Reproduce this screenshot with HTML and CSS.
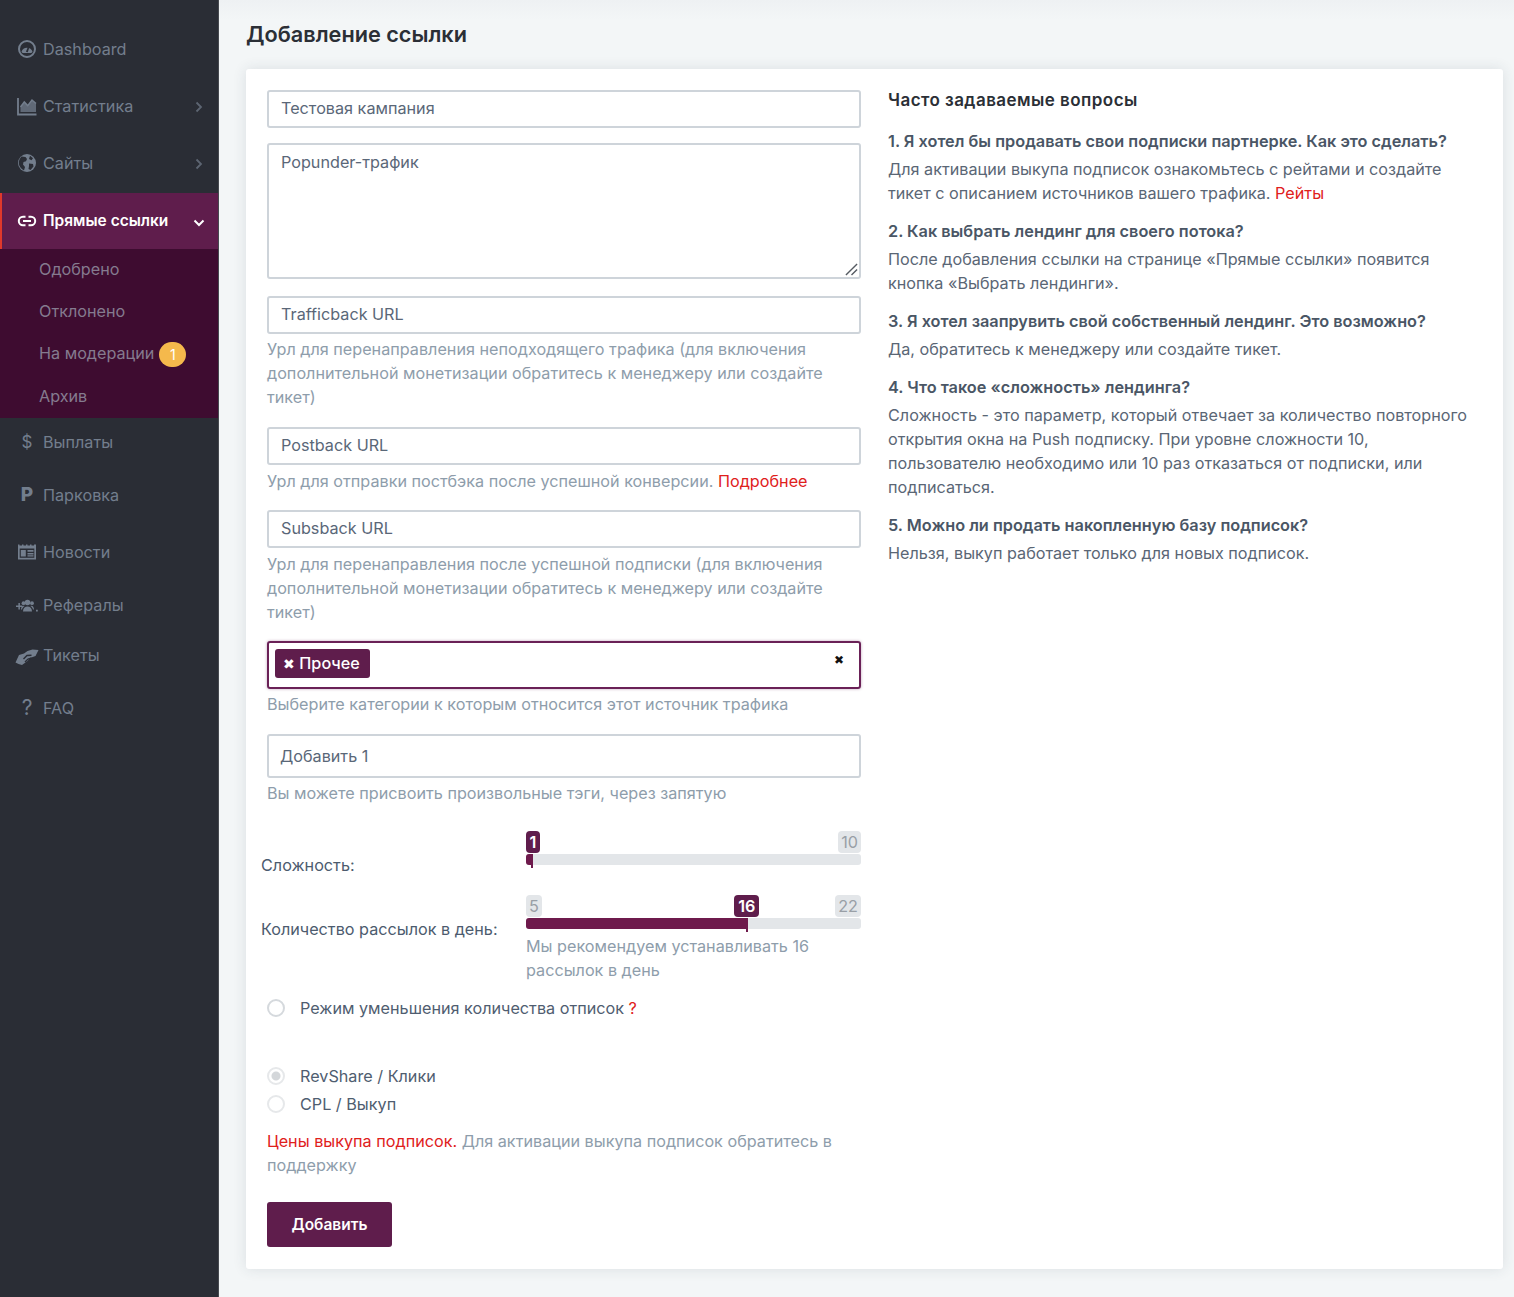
FILE: index.html
```html
<!DOCTYPE html>
<html lang="en">
<head>
    <meta charset="UTF-8">
    <title>Добавление ссылки</title>
    <link rel="stylesheet" href="styles.css">
</head>
<body>
    <div class="layout">
        <nav class="sidebar">
            <a class="navItem">
                <svg class="navIcon" viewBox="0 0 20 20"><circle cx="10" cy="10" r="8" fill="none" stroke="currentColor" stroke-width="2"/><path d="M4.500 12.800a5.800 5.800 0 0 1 11 0c-.4.900-1.200 1.200-2 1.200h-7c-.8 0-1.600-.3-2-1.200z" fill="currentColor"/><path d="M8.900 12.800l3-7.300 1.200.5-2.300 7.300z" fill="#2a2d35"/></svg>
                <span>Dashboard</span>
            </a>
            <a class="navItem">
                <svg class="navIcon" viewBox="0 0 20 20"><path d="M1 2v16.500h18.500" fill="none" stroke="currentColor" stroke-width="1.800"/><path d="M3.500 16V11l3.800-5 3.400 3.600L15 4l4 3.500V16z" fill="currentColor" opacity="0.75"/><path d="M3.500 11l3.800-5 3.400 3.600L15 4l4 3.500" fill="none" stroke="currentColor" stroke-width="1.500"/></svg>
                <span>Статистика</span>
                <svg class="navArrow" viewBox="0 0 10 12"><path d="M2.500 1.500L7 6l-4.500 4.500" fill="none" stroke="currentColor" stroke-width="1.800"/></svg>
            </a>
            <a class="navItem">
                <svg class="navIcon" viewBox="0 0 20 20"><circle cx="10" cy="10" r="9" fill="currentColor"/><path d="M4.500 3.500L8.500 4l1.500 2-1 2.200-2.500.8-.5 2.500 2 2.500-1 3.500C4 15.500 1.800 13 1.800 10c0-2.500 1-4.800 2.700-6.500zM12 10.500l4 .5.500 2.500-3 3.500-2-1 .5-3zM13 2.800l3 2.500-1.500 2-2.500-1.300z" fill="#2a2d35"/></svg>
                <span>Сайты</span>
                <svg class="navArrow" viewBox="0 0 10 12"><path d="M2.500 1.500L7 6l-4.500 4.500" fill="none" stroke="currentColor" stroke-width="1.800"/></svg>
            </a>
            <a class="navItem navActive">
                <svg class="navIcon" viewBox="0 0 20 20"><path d="M8.500 5.800H6a4.200 4.200 0 0 0 0 8.400h2.500M11.500 5.800H14a4.200 4.200 0 0 1 0 8.400h-2.500M6 10h8" fill="none" stroke="currentColor" stroke-width="2"/></svg>
                <span>Прямые ссылки</span>
                <svg class="navArrow navArrowDown" viewBox="0 0 12 10"><path d="M1.500 2.500L6 7l4.500-4.500" fill="none" stroke="currentColor" stroke-width="2"/></svg>
            </a>
            <div class="subMenu">
                <a class="subItem">Одобрено</a>
                <a class="subItem">Отклонено</a>
                <a class="subItem">На модерации <span class="badge">1</span></a>
                <a class="subItem">Архив</a>
            </div>
            <a class="navItem h50">
                <span class="navGlyph">$</span>
                <span>Выплаты</span>
            </a>
            <a class="navItem h56">
                <span class="navGlyph navGlyphBold">P</span>
                <span>Парковка</span>
            </a>
            <a class="navItem h58">
                <svg class="navIcon" viewBox="0 0 20 20"><path d="M1 2.500h1.500v1H5v-1h1.500v1H9v-1h1.500v1H13v-1h1.500v1H17v-1h2v15H1z" fill="currentColor"/><path d="M2.700 6.500h14.600v9.300H2.700z" fill="#2a2d35"/><path d="M3.800 8h5v6.500h-5zM10.500 8h6v1.700h-6zM10.500 11h6v1.400h-6zM10.500 13.300h6v1.200h-6z" fill="currentColor"/></svg>
                <span>Новости</span>
            </a>
            <a class="navItem h48">
                <svg class="navIcon navIconUsers" viewBox="0 0 22 20"><path d="M0 9.500h2.400V7.100h1.500v2.400h2.400V11H3.900v2.400H2.400V11H0z" fill="currentColor"/><circle cx="11.500" cy="6.500" r="2.800" fill="currentColor"/><circle cx="7.500" cy="7.200" r="1.900" fill="currentColor"/><circle cx="16" cy="7.200" r="1.900" fill="currentColor"/><path d="M7 15.500c0-3.300 2-5 4.500-5s4.500 1.700 4.500 5zM5 13.500c.1-2.300 1-3.700 2.600-3.700.4 0 .8.100 1 .2C7.200 11 6.300 12.200 6 13.500zM17 13.500c-.3-1.300-1.200-2.500-2.600-3.500.2-.1.600-.2 1-.2 1.600 0 2.500 1.400 2.600 3.700zM20 13.700h1.800v1.800H20z" fill="currentColor"/></svg>
                <span>Рефералы</span>
            </a>
            <a class="navItem h52">
                <svg class="navIcon navIconWide" viewBox="0 0 24 20"><path d="M.5 15.500l3.500-7.500 5-1.500L12.500 4l5-1.500 6 .5-3 6-5.500 2-2.500 3-5.500 4-3.500-1z" fill="currentColor"/><path d="M8.500 12l3.500-3.500 4.500-.3M10 15l3-3 3.500-1" fill="none" stroke="#2a2d35" stroke-width="1.400"/></svg>
                <span>Тикеты</span>
            </a>
            <a class="navItem h54">
                <span class="navGlyph navGlyphBig">?</span>
                <span>FAQ</span>
            </a>
        </nav>

        <main class="content">
            <h1 class="pageTitle">Добавление ссылки</h1>
            <div class="card">
                <form class="formCol">
                    <input class="field" type="text" value="Тестовая кампания">
                    <div class="areaWrap">
                        <textarea class="field fieldArea">Popunder-трафик</textarea>
                        <svg class="areaGrip" viewBox="0 0 14 14"><path d="M1 13L13 1M7 13l6-6" fill="none" stroke="#555b62" stroke-width="1.500"/></svg>
                    </div>

                    <input class="field gapTop" type="text" value="Trafficback URL">
                    <p class="help helpRaised">Урл для перенаправления неподходящего трафика (для включения дополнительной монетизации обратитесь к менеджеру или создайте тикет)</p>

                    <input class="field gapTop" type="text" value="Postback URL">
                    <p class="help"><span>Урл для отправки постбэка после успешной конверсии.</span> <a class="redLink">Подробнее</a></p>

                    <input class="field gapTop" type="text" value="Subsback URL">
                    <p class="help">Урл для перенаправления после успешной подписки (для включения дополнительной монетизации обратитесь к менеджеру или создайте тикет)</p>

                    <div class="tagSelect">
                        <span class="tag"><span class="tagClose">✖</span> Прочее</span>
                        <span class="selectClear">✖</span>
                    </div>
                    <p class="help helpTight">Выберите категории к которым относится этот источник трафика</p>

                    <input class="field fieldTall" type="text" value="Добавить 1">
                    <p class="help helpTight">Вы можете присвоить произвольные тэги, через запятую</p>

                    <div class="sliderRow firstSlider">
                        <label class="sliderLabel">Сложность:</label>
                        <div class="slider">
                            <div class="sliderEnds">
                                <span class="bubble bubbleHidden">1</span>
                                <span class="bubble">10</span>
                            </div>
                            <div class="track">
                                <div class="fill" style="width: 2%"></div>
                                <span class="bubble bubbleValue bubbleNarrow" style="left: 0">1</span>
                            </div>
                        </div>
                    </div>

                    <div class="sliderRow secondSlider">
                        <label class="sliderLabel">Количество рассылок в день:</label>
                        <div class="slider">
                            <div class="sliderEnds">
                                <span class="bubble">5</span>
                                <span class="bubble">22</span>
                            </div>
                            <div class="track">
                                <div class="fill" style="width: 66.3%"></div>
                                <span class="bubble bubbleValue" style="left: 62.2%">16</span>
                            </div>
                            <p class="help sliderHelp">Мы рекомендуем устанавливать 16 рассылок в день</p>
                        </div>
                    </div>

                    <label class="radioRow radioFirst">
                        <input class="radio" type="radio">
                        <span>Режим уменьшения количества отписок <a class="redLink">?</a></span>
                    </label>

                    <label class="radioRow radioSecond">
                        <input class="radio" type="radio" checked disabled>
                        <span>RevShare / Клики</span>
                    </label>
                    <label class="radioRow radioThird">
                        <input class="radio" type="radio" disabled>
                        <span>CPL / Выкуп</span>
                    </label>
                    <p class="help priceHelp"><a class="redLink">Цены выкупа подписок.</a> <span>Для активации выкупа подписок обратитесь в поддержку</span></p>

                    <button class="submitButton" type="button">Добавить</button>
                </form>

                <aside class="faq">
                    <h2 class="faqTitle">Часто задаваемые вопросы</h2>
                    <h3 class="faqQuestion">1. Я хотел бы продавать свои подписки партнерке. Как это сделать?</h3>
                    <p class="faqAnswer"><span>Для активации выкупа подписок ознакомьтесь с рейтами и создайте тикет с описанием источников вашего трафика.</span> <a class="redLink">Рейты</a></p>
                    <h3 class="faqQuestion">2. Как выбрать лендинг для своего потока?</h3>
                    <p class="faqAnswer">После добавления ссылки на странице «Прямые ссылки» появится кнопка «Выбрать лендинги».</p>
                    <h3 class="faqQuestion">3. Я хотел заапрувить свой собственный лендинг. Это возможно?</h3>
                    <p class="faqAnswer">Да, обратитесь к менеджеру или создайте тикет.</p>
                    <h3 class="faqQuestion">4. Что такое «сложность» лендинга?</h3>
                    <p class="faqAnswer">Сложность - это параметр, который отвечает за количество повторного открытия окна на Push подписку. При уровне сложности 10, пользователю необходимо или 10 раз отказаться от подписки, или подписаться.</p>
                    <h3 class="faqQuestion">5. Можно ли продать накопленную базу подписок?</h3>
                    <p class="faqAnswer">Нельзя, выкуп работает только для новых подписок.</p>
                </aside>
            </div>
        </main>
    </div>
</body>
</html>
```

FILE: styles.css
```css
* {
    box-sizing: border-box;
}
body {
    margin: 0;
    font-family: Inter, "Noto Sans", sans-serif;
    font-size: 16.2px;
    color: #55616f;
    background-color: #f3f6f7;
}
p, h1, h2, h3 {
    margin: 0;
}
.layout {
    display: flex;
    height: 1297px;
    overflow: hidden;
}

/* sidebar */
.sidebar {
    width: 219px;
    flex-shrink: 0;
    padding-top: 21.5px;
    background-color: #2a2d35;
    border-right: 1px solid #474a50;
    color: #737e8d;
}
.navItem {
    display: flex;
    align-items: center;
    height: 57px;
    padding: 0 14px 2px 17px;
    font-size: 16.2px;
}
.navIcon {
    width: 20px;
    height: 20px;
    margin-right: 6px;
    flex-shrink: 0;
}
.navIconUsers {
    width: 22px;
    margin-left: -1px;
    margin-right: 5px;
    margin-top: 2px;
}
.navIconWide {
    width: 24px;
    margin-left: -2px;
    margin-right: 4px;
    margin-top: 5px;
}
.navGlyph {
    width: 20px;
    margin-right: 6px;
    text-align: center;
    font-size: 17px;
}
.navGlyphBold {
    font-size: 19px;
    font-weight: 800;
}
.navGlyphBig {
    font-size: 21px;
}
.navArrow {
    width: 10px;
    height: 12px;
    margin-left: auto;
    margin-top: 2px;
    opacity: 0.7;
}
.navArrowDown {
    width: 12px;
    height: 10px;
    opacity: 1;
    margin-top: 4px;
    margin-right: -1px;
}
.navActive {
    height: 56px;
    padding-left: 15px;
    padding-bottom: 0;
    background-color: #5f1d4c;
    border-left: 2px solid #e0392b;
    color: #ffffff;
    font-size: 15.5px;
    font-weight: 600;
}
.h48 { height: 48px; }
.h50 { height: 50px; }
.h52 { height: 52px; }
.h54 { height: 54px; }
.h56 { height: 56px; }
.h58 { height: 58px; }
.subMenu {
    height: 169px;
    background-color: #3e0c30;
}
.subItem {
    display: flex;
    align-items: center;
    height: 42.3px;
    padding: 0 0 2px 39px;
    font-size: 16.2px;
    color: #857b8f;
}
.badge {
    display: inline-flex;
    justify-content: center;
    align-items: center;
    width: 27px;
    height: 25px;
    margin-left: 5px;
    margin-top: 2px;
    border-radius: 13px;
    background-color: #f5b94c;
    color: #ffffff;
    font-size: 14px;
}

/* main */
.content {
    flex: 1;
    padding: 21px 11px 0 27px;
    background: linear-gradient(#eef1f3, #f3f6f7 20px);
}
.pageTitle {
    height: 48px;
    font-size: 21.7px;
    line-height: 26px;
    font-weight: 600;
    color: #2b2f36;
}
.card {
    display: flex;
    height: 1200px;
    padding: 21px 21px 0;
    background-color: #ffffff;
    border-radius: 3px;
    box-shadow: 0 0 14px rgba(40, 60, 70, 0.12);
}
.formCol {
    width: 594px;
    flex-shrink: 0;
}
.field {
    display: block;
    width: 100%;
    height: 38px;
    padding: 0 12px 2px;
    border: 2px solid #ced4da;
    border-radius: 3px;
    background-color: #ffffff;
    font-family: inherit;
    font-size: 16.2px;
    color: #5a6778;
}
.areaWrap {
    position: relative;
    margin-top: 15px;
}
.fieldArea {
    height: 136px;
    padding-top: 6px;
    line-height: 22px;
    resize: none;
}
.areaGrip {
    position: absolute;
    right: 3px;
    bottom: 3px;
    width: 13px;
    height: 13px;
}
.gapTop {
    margin-top: 17px;
}
.fieldTall {
    height: 44px;
    margin-top: 18px;
    padding: 0 11px;
}
.help {
    margin-top: 4px;
    line-height: 24px;
    font-size: 16.2px;
    color: #8e9dab;
}
.helpRaised {
    margin-top: 3px;
    padding-bottom: 1px;
}
.helpTight {
    margin-top: 3px;
}
.redLink {
    color: #e0201b;
}

/* tags */
.tagSelect {
    display: flex;
    justify-content: space-between;
    height: 48px;
    margin-top: 17px;
    padding: 6px 15px 0 6px;
    border: 2px solid #6a2157;
    border-radius: 3px;
    box-shadow: 0 0 3px rgba(106, 33, 87, 0.4);
}
.tag {
    height: 29px;
    padding: 0 10px 0 8px;
    border-radius: 3px;
    background-color: #5f1d4c;
    color: #ffffff;
    font-size: 16.2px;
    font-weight: 500;
    line-height: 28px;
}
.tagClose {
    font-size: 13.5px;
}
.selectClear {
    font-size: 12px;
    line-height: 22px;
    color: #111111;
}

/* sliders */
.sliderRow {
    display: flex;
    margin-left: -6px;
}
.firstSlider {
    margin-top: 25.6px;
}
.secondSlider {
    margin-top: 18px;
}
.sliderLabel {
    width: 265px;
    padding-top: 22px;
    line-height: 24px;
    font-size: 16.2px;
    color: #4c5b6e;
}
.slider {
    width: 335px;
}
.sliderEnds {
    display: flex;
    justify-content: space-between;
    height: 23px;
}
.bubble {
    display: block;
    height: 22px;
    padding: 0 3px;
    border-radius: 4px;
    background-color: #e3e6e9;
    color: #999fa6;
    font-size: 16.2px;
    line-height: 22px;
    text-align: center;
}
.bubbleHidden {
    visibility: hidden;
}
.bubbleValue {
    position: absolute;
    top: -23px;
    width: 25px;
    padding: 0;
    background-color: #5f1d4c;
    color: #ffffff;
    font-weight: 600;
}
.bubbleNarrow {
    width: 14px;
}
.track {
    position: relative;
    height: 11px;
    border-radius: 3px;
    background-color: #e3e6e9;
}
.fill {
    position: relative;
    height: 11px;
    border-radius: 3px 0 0 3px;
    background-color: #6e1a4c;
}
.fill::after {
    content: "";
    position: absolute;
    top: 0;
    right: 0;
    width: 2px;
    height: 14px;
    background-color: #6e1a4c;
}
.sliderHelp {
    margin-top: 5px;
}

/* radios */
.radioRow {
    display: flex;
    align-items: center;
    line-height: 24px;
    font-size: 16.2px;
    color: #4f5d70;
}
.radioFirst {
    margin-top: 14px;
}
.radioSecond {
    margin-top: 44px;
}
.radioThird {
    margin-top: 4px;
}
.radio {
    appearance: none;
    width: 18px;
    height: 18px;
    margin: 0 15px 0 0;
    border: 2px solid #d5d9dd;
    border-radius: 50%;
    background-color: #ffffff;
}
.radio:disabled {
    border-color: #e6e8ea;
}
.radio:checked {
    background: radial-gradient(circle, #d4d7da 0, #d4d7da 4px, #ffffff 5px);
}
.priceHelp {
    margin-top: 13px;
}
.submitButton {
    display: block;
    width: 125px;
    height: 45px;
    margin-top: 25px;
    border: none;
    border-radius: 3px;
    background-color: #5f1d4c;
    color: #ffffff;
    font-family: inherit;
    font-size: 15.5px;
    font-weight: 600;
}

/* faq */
.faq {
    flex: 1;
    padding: 0 8px 0 27px;
    font-size: 16.2px;
    line-height: 24px;
}
.faqTitle {
    font-size: 17px;
    line-height: 20px;
    font-weight: 600;
    letter-spacing: 0.45px;
    color: #2b2f36;
}
.faqQuestion {
    margin-top: 14px;
    font-size: 16.3px;
    font-weight: 600;
    color: #4a5665;
}
.faqTitle + .faqQuestion {
    margin-top: 19px;
}
.faqAnswer {
    margin-top: 4px;
    color: #5a6675;
}
```
